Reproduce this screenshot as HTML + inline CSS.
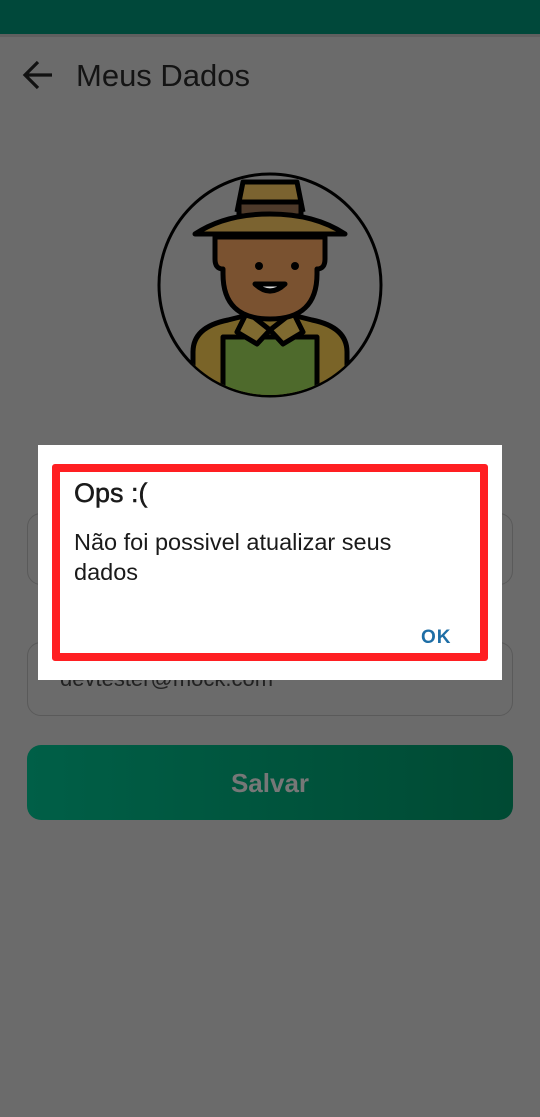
<!DOCTYPE html>
<html><head><meta charset="utf-8"><style>
body{margin:0;width:540px;height:1117px;background:#6b6b6b;position:relative;overflow:hidden;font-family:"Liberation Sans",sans-serif}
.abs{position:absolute}
</style></head><body>
<div class="abs" style="left:0;top:0;width:540px;height:34px;background:#00483a"></div>
<div class="abs" style="left:0;top:34px;width:540px;height:3px;background:#5f5f5f"></div>
<svg class="abs" style="left:20px;top:58px" width="36" height="34" viewBox="0 0 36 34"><path d="M32 17H6M18 4L5 17l13 13" stroke="#111" stroke-width="3.2" fill="none"/></svg>
<div class="abs" style="left:76px;top:58px;font-size:31px;color:#141414">Meus Dados</div>
<svg class="abs" style="left:157px;top:172px" width="226" height="226" viewBox="0 0 226 226">
<circle cx="113" cy="113" r="111" fill="#6b6b6b" stroke="#000" stroke-width="3"/>
<clipPath id="c"><circle cx="113" cy="113" r="110"/></clipPath>
<g clip-path="url(#c)" stroke="#000" stroke-width="5" stroke-linejoin="round">
<path d="M36 180q0-25 35-32l20-5h44l20 5q35 7 35 32v60H36z" fill="#7a6428"/>
<rect x="66" y="165" width="94" height="70" fill="#4e6a2c"/>
<path d="M90 110v30h46v-30z" fill="#6a4a2c"/>
<path d="M90 140l23 18 23-18 10 20-20 12-13-14-13 14-20-12z" fill="#7f6a30"/>
<path d="M58 65h110v22q0 10-8 10v5q0 45-47 45t-47-45v-5q-8 0-8-10z" fill="#7a5230"/>
<path d="M80 40l6-30h54l6 30" fill="#7b6330"/>
<path d="M82 30h62v14H82z" fill="#4e3a2a"/>
<path d="M38 62q30-20 75-20t75 20z" fill="#7b6330"/>
<path d="M98 112q15 14 30 0z" fill="#ddd"/>
</g>
<circle cx="102" cy="94" r="4"/><circle cx="138" cy="94" r="4"/>
</svg>
<div class="abs" style="left:27px;top:513px;width:484px;height:70px;border:1px solid #5a5a5a;border-radius:14px"></div>
<div class="abs" style="left:27px;top:642px;width:484px;height:72px;border:1px solid #5a5a5a;border-radius:14px"></div>
<div class="abs" style="left:60px;top:666px;font-size:22px;color:#222">devtester@mock.com</div>
<div class="abs" style="left:27px;top:745px;width:486px;height:75px;border-radius:14px;background:linear-gradient(90deg,#005f47,#004a33);color:#777;font-weight:bold;font-size:26px;text-align:center;line-height:76px">Salvar</div>
<div class="abs" style="left:38px;top:445px;width:464px;height:235px;background:#fff"></div>
<div class="abs" style="left:52px;top:464px;width:420px;height:181px;border:8px solid #ff1f22;border-radius:3px"></div>
<div class="abs" style="left:74px;top:478px;font-size:27px;color:#1a1a1a;-webkit-text-stroke:0.5px #1a1a1a">Ops :(</div>
<div class="abs" style="left:74px;top:527px;font-size:23.5px;line-height:30px;color:#1a1a1a">Não foi possivel atualizar seus<br>dados</div>
<div class="abs" style="left:421px;top:627px;font-size:19px;letter-spacing:1px;color:#1e6ea6;font-weight:bold">OK</div>
</body></html>
